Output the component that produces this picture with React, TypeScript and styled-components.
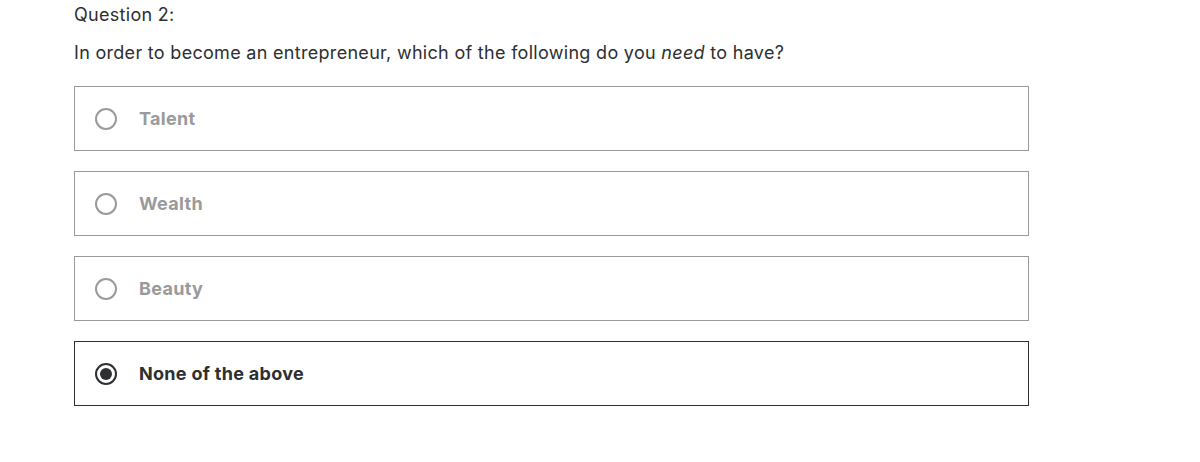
import React, { useState } from "react"
import styled, { createGlobalStyle } from "styled-components"

const options = ["Talent", "Wealth", "Beauty", "None of the above"]

const App = () => {
    const [selected, setSelected] = useState<number>(3)

    return (
        <>
            <GlobalStyle />
            <Page>
                <Title>Question 2:</Title>
                <Prompt>
                    In order to become an entrepreneur, which of the following do you <em>need</em> to have?
                </Prompt>
                <Answers>
                    {options.map((option, i) => {
                        return (
                            <Answer key={option} active={i === selected} onClick={() => setSelected(i)}>
                                <Radio active={i === selected} />
                                <Label active={i === selected}>{option}</Label>
                            </Answer>
                        )
                    })}
                </Answers>
            </Page>
        </>
    )
}

const GlobalStyle = createGlobalStyle`
    body {
        margin: 0;
        background: #fff;
        font-family: Inter, "Noto Sans", sans-serif;
        color: #2d2f31;
        letter-spacing: 0.3px;
    }
`

const Page = styled.div`
    width: 955px;
    padding: 3px 0 0 74px;
`

const Title = styled.div`
    font-size: 18px;
    line-height: 24px;
`

const Prompt = styled.p`
    margin: 14px 0 21px;
    font-size: 18px;
    line-height: 24px;

    em {
        font-style: italic;
    }
`

const Answers = styled.div`
    display: flex;
    flex-direction: column;
    gap: 20px;
`

const Answer = styled.label<{ active: boolean }>`
    display: flex;
    align-items: center;
    gap: 22px;
    height: 65px;
    box-sizing: border-box;
    padding: 0 20px;
    border: 1px solid ${(p) => (p.active ? "#2d2f31" : "#9a9a9a")};
    cursor: pointer;
`

const Radio = styled.span<{ active: boolean }>`
    position: relative;
    width: 22px;
    height: 22px;
    box-sizing: border-box;
    border-radius: 50%;
    border: 2px solid ${(p) => (p.active ? "#2d2f31" : "#9a9a9a")};

    &::after {
        content: "";
        display: ${(p) => (p.active ? "block" : "none")};
        position: absolute;
        inset: 3px;
        border-radius: 50%;
        background: #2d2f31;
    }
`

const Label = styled.span<{ active: boolean }>`
    font-size: 18px;
    font-weight: 700;
    color: ${(p) => (p.active ? "#2d2f31" : "#9a9a9a")};
`

export default App
